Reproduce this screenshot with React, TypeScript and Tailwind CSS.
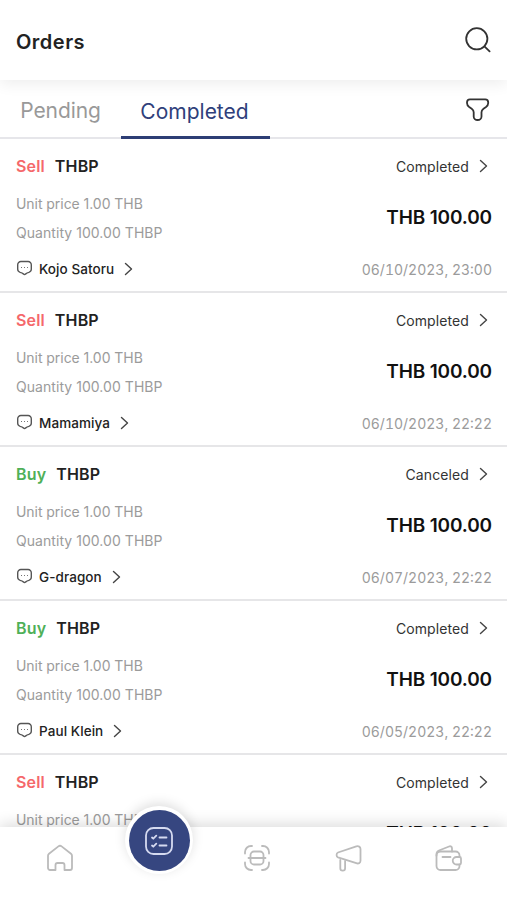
import type { ReactNode } from "react";
import clsx from "clsx";

type Order = {
  side: "Sell" | "Buy";
  status: string;
  name: string;
  date: string;
};

const orders: Order[] = [
  { side: "Sell", status: "Completed", name: "Kojo Satoru", date: "06/10/2023, 23:00" },
  { side: "Sell", status: "Completed", name: "Mamamiya", date: "06/10/2023, 22:22" },
  { side: "Buy", status: "Canceled", name: "G-dragon", date: "06/07/2023, 22:22" },
  { side: "Buy", status: "Completed", name: "Paul Klein", date: "06/05/2023, 22:22" },
  { side: "Sell", status: "Completed", name: "Kojo Satoru", date: "06/05/2023, 21:10" },
];

function Icon({ className, children }: { className?: string; children: ReactNode }) {
  return (
    <svg
      viewBox="0 0 28 28"
      fill="none"
      stroke="currentColor"
      strokeWidth="1.8"
      strokeLinecap="round"
      strokeLinejoin="round"
      className={clsx("size-7 shrink-0", className)}
    >
      {children}
    </svg>
  );
}

function Chevron() {
  return (
    <svg
      viewBox="0 0 10 14"
      fill="none"
      stroke="currentColor"
      strokeWidth="1.4"
      strokeLinecap="round"
      strokeLinejoin="round"
      className="h-[14px] w-[10px] shrink-0 text-[#444]"
    >
      <path d="M1.500 1.500 7.500 7l-6 5.500" />
    </svg>
  );
}

function ChatIcon() {
  return (
    <svg
      viewBox="0 0 16 16"
      fill="none"
      stroke="currentColor"
      strokeWidth="1.3"
      strokeLinecap="round"
      strokeLinejoin="round"
      className="-mt-0.5 size-[17px] shrink-0 text-[#555]"
    >
      <path d="M4.600 1.400h6.800a3 3 0 0 1 3 3v4.400c0 1.500-.9 2.400-2.300 2.800-1.400.3-2.100.7-3.200 1.700-.5.5-1.200.5-1.700 0-1.100-1-1.900-1.400-3.300-1.700C2.500 11.200 1.600 10.300 1.600 8.800V4.400a3 3 0 0 1 3-3Z" />
      <path d="M5.200 7h.01M8 7h.01M10.800 7h.01" strokeWidth="1" />
    </svg>
  );
}

function Header() {
  return (
    <header className="relative flex h-20 shrink-0 items-center justify-between bg-white pl-4 pr-[15px] pt-[3px] shadow-[0_4px_14px_rgba(0,0,0,0.07)]">
      <h1 className="text-[20px] font-semibold tracking-[0.5px] text-[#222]">Orders</h1>
      <Icon className="-mt-[3px] text-[#333]">
        <circle cx="12.800" cy="12.800" r="10.600" />
        <path d="m20.400 20.400 5.200 5" />
      </Icon>
    </header>
  );
}

function Tabs() {
  return (
    <div className="flex h-[59px] shrink-0 items-stretch border-b-2 border-[#e6e6ea] pr-[15px] text-[21px]">
      <button className="w-[121px] pt-[5px] tracking-[-0.1px] text-[#999]">Pending</button>
      <button className="-mb-0.5 w-[149px] border-b-[3px] border-[#2d3e75] pr-0.5 pt-[7px] text-[#2f3f7b]">
        Completed
      </button>
      <Icon className="ml-auto mt-4 text-[#333]">
        <path d="M6 3.400h15.200c1.800 0 3 1.300 3 3v.6c0 1.700-.8 3-2.200 4l-2.500 1.700c-1.400 1-2 2-2 3.600v4.200c0 2-1.700 3.500-3.900 3.500s-3.900-1.500-3.900-3.500v-4.200c0-1.600-.6-2.600-2-3.600L5.200 11C3.800 10 3 8.700 3 7v-.6c0-1.700 1.200-3 3-3Z" />
      </Icon>
    </div>
  );
}

function OrderRow({ order }: { order: Order }) {
  return (
    <li className="h-[154px] border-b-2 border-[#e6e6e8] pl-4 pr-[15px] pt-4">
      <div className="flex h-[22px] items-center justify-between">
        <div className="flex gap-2.5 text-base font-semibold tracking-[0.15px] text-[#222]">
          <span className={order.side === "Sell" ? "text-[#f5686b]" : "text-[#4fb058]"}>
            {order.side}
          </span>
          <span>THBP</span>
        </div>
        <div className="flex items-center gap-2.5 pr-[3px] text-sm tracking-[0.1px] text-[#333]">
          <span className="pt-0.5">{order.status}</span>
          <Chevron />
        </div>
      </div>
      <div className="mt-3 flex items-center justify-between">
        <div className="text-sm leading-[29px] text-[#9b9b9b]">
          <p className="tracking-[-0.05px]">Unit price 1.00 THB</p>
          <p className="tracking-[0.05px]">Quantity 100.00 THBP</p>
        </div>
        <p className="text-[19px] font-semibold tracking-[-0.15px] text-[#111]">THB 100.00</p>
      </div>
      <div className="mt-[11px] flex h-[22px] items-center justify-between text-sm">
        <div className="flex items-center text-[#222]">
          <ChatIcon />
          <span className="ml-1.5 mr-2.5 pt-0.5 text-[13.5px] font-medium tracking-[0.08px]">
            {order.name}
          </span>
          <Chevron />
        </div>
        <span className="pt-px tabular-nums text-[#9b9b9b]">{order.date}</span>
      </div>
    </li>
  );
}

function BottomNav() {
  return (
    <nav className="absolute inset-x-0 bottom-0 flex h-[73px] items-start bg-white pl-[46px] pt-[17px] text-[#bbb] shadow-[0_-3px_14px_rgba(0,0,0,0.14)]">
      <Icon>
        <path d="M2 11.800c0-.8.4-1.500 1-2L12.400 2.400c1-.8 2.200-.8 3.200 0L25 9.800c.6.5 1 1.200 1 2V24a2 2 0 0 1-2 2h-5.500v-5a2 2 0 0 0-2-2h-5a2 2 0 0 0-2 2v5H4a2 2 0 0 1-2-2Z" />
      </Icon>
      <div className="-mt-[38px] ml-[51px] flex size-[68px] items-center justify-center rounded-full bg-white shadow-[0_-3px_12px_rgba(0,0,0,0.13)]">
        <button className="flex size-[61px] items-center justify-center rounded-full bg-[#364680] text-[#d5daf0]">
          <Icon className="mt-px">
            <rect x="1" y="1" width="26" height="26" rx="7.500" />
            <path d="m7 10.500 1.300 1.200 3-3M14.500 10.500h7M7 18.500l1.300 1.200 3-3M14.500 18.500h7" />
          </Icon>
        </button>
      </div>
      <Icon className="ml-[50px]">
        <path d="M2 9.500V8a6 6 0 0 1 6-6h1M19 2h1a6 6 0 0 1 6 6v1.500M26 18.500V20a6 6 0 0 1-6 6h-1M9 26H8a6 6 0 0 1-6-6v-1.500" />
        <path d="M5.500 14h17" />
        <rect x="7.500" y="7.500" width="13" height="13" rx="3.500" />
      </Icon>
      <Icon className="ml-[63px]">
        <path d="m4 8.500 18.300-6.100c2.200-.7 4.200.4 4.200 2.600v11.800c0 2.200-2 3.200-4.200 2.400L4 13.300c-1.900-.7-1.900-4.100 0-4.800Z" />
        <path d="M6.300 16v8.300a2.400 2.400 0 0 0 4.800 0V17" />
      </Icon>
      <Icon className="ml-[73px]">
        <path d="M24.500 13v-1.500a4 4 0 0 0-4-4H5.500a4 4 0 0 0-4 4V22a4 4 0 0 0 4 4h15a4 4 0 0 0 4-4v-1.500" />
        <path d="M24.500 13h-3a3.750 3.750 0 0 0 0 7.500h3c1 0 1.500-.5 1.500-1.500v-4.500c0-1-.5-1.500-1.500-1.500ZM7.500 13h8M1.500 11.500V10c0-1.800.8-2.800 2.500-3.500l10-4c1.700-.7 3 .2 3 2v3" />
      </Icon>
    </nav>
  );
}

export default function App() {
  return (
    <div className="relative flex h-screen flex-col overflow-hidden bg-white font-['Inter','Liberation_Sans',sans-serif]">
      <Header />
      <Tabs />
      <ul className="min-h-0 flex-1 overflow-hidden">
        {orders.map((order, i) => (
          <OrderRow key={i} order={order} />
        ))}
      </ul>
      <BottomNav />
    </div>
  );
}
